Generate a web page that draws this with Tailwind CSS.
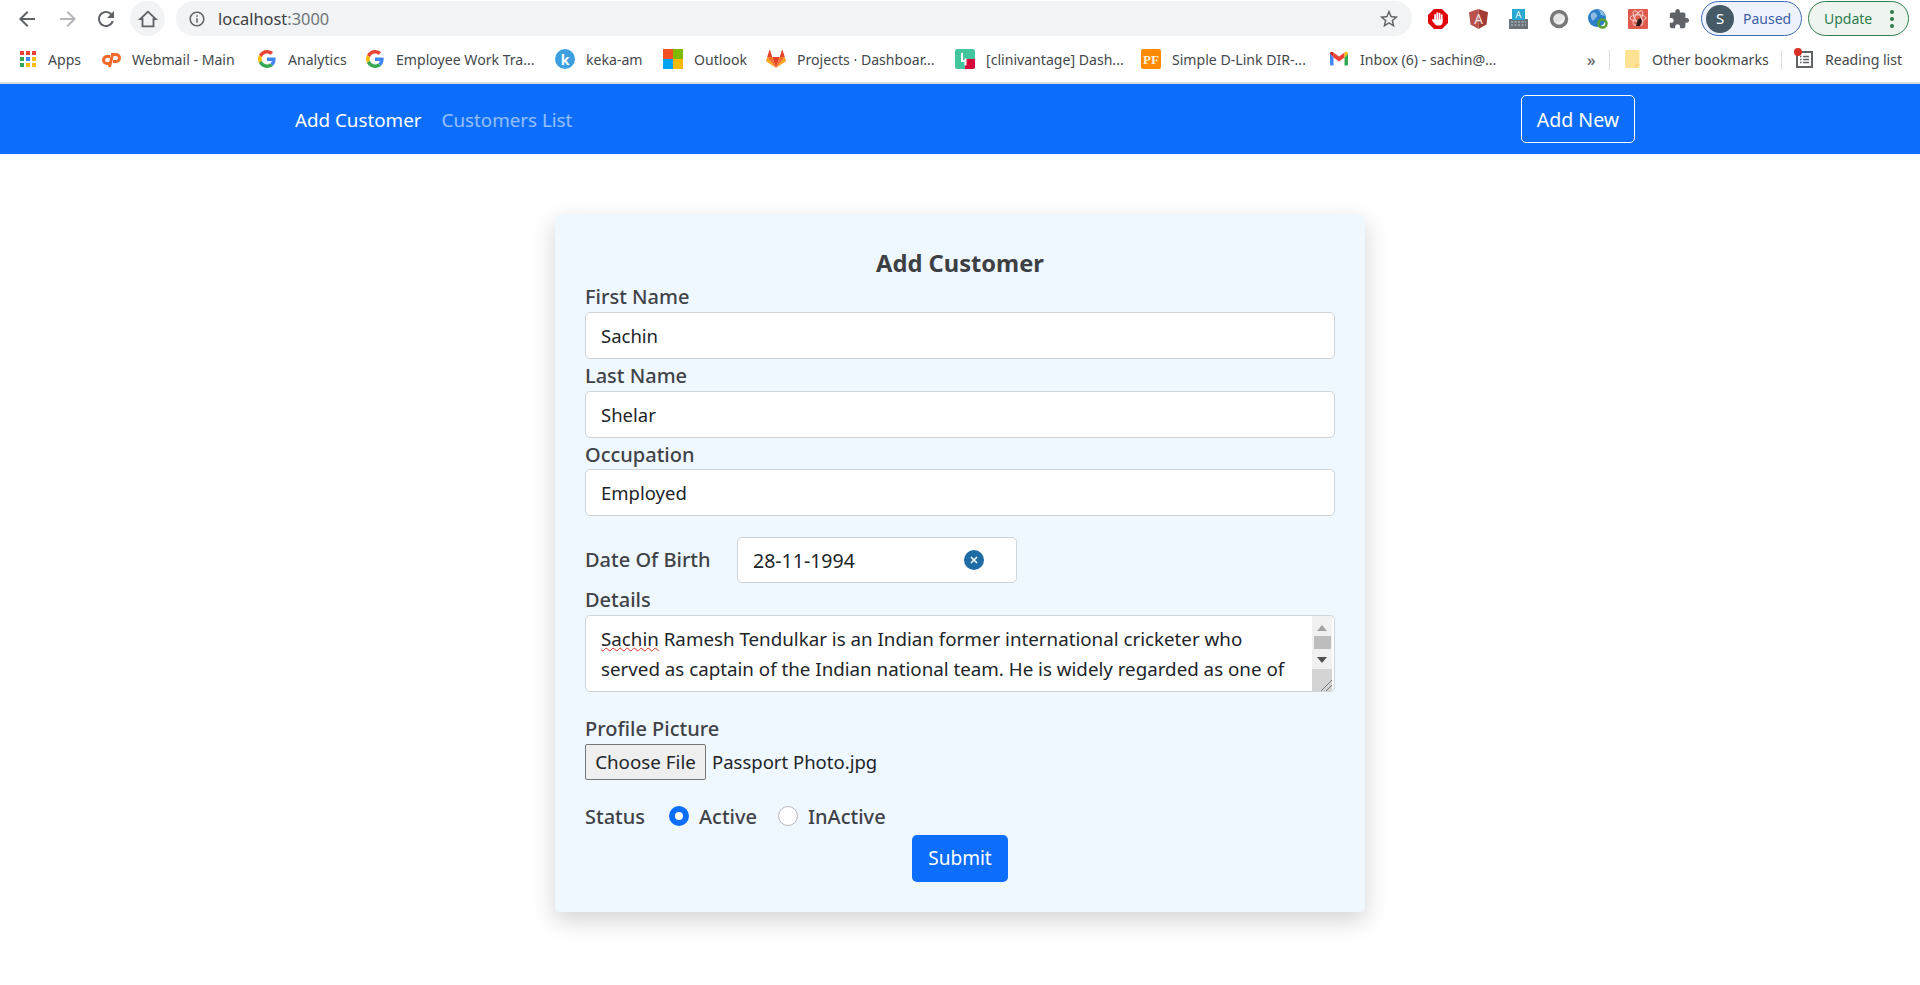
<!DOCTYPE html>
<html lang="en">
<head>
    <meta charset="UTF-8"/>
    <meta name="viewport" content="width=device-width, initial-scale=1.0"/>
    <title>Add Customer</title>
    <script src="https://cdn.jsdelivr.net/npm/@tailwindcss/browser@4"></script>
</head>
<body class="bg-white font-['Noto_Sans',sans-serif] text-[#212529] h-[985px] overflow-hidden">

<!-- browser toolbar -->
<div class="h-[37px] flex items-center relative">
    <div class="w-[54px] flex justify-center"><svg class="w-[24px] h-[24px]" viewBox="0 0 24 24" fill="#5f6368"><path d="M20 11H7.830l5.590-5.590L12 4l-8 8 8 8 1.410-1.410L7.830 13H20v-2z"/></svg></div>
    <div class="w-[28px] flex justify-center"><svg class="w-[24px] h-[24px]" viewBox="0 0 24 24" fill="#b4b6b9"><path d="M12 4l-1.410 1.410L16.170 11H4v2h12.170l-5.580 5.590L12 20l8-8z"/></svg></div>
    <div class="w-[48px] flex justify-center"><svg class="w-[24px] h-[24px]" viewBox="0 0 24 24" fill="#5f6368"><path d="M17.650 6.350C16.200 4.900 14.210 4 12 4c-4.420 0-7.990 3.580-7.990 8s3.570 8 7.990 8c3.730 0 6.840-2.550 7.730-6h-2.080c-.82 2.330-3.040 4-5.650 4-3.310 0-6-2.690-6-6s2.690-6 6-6c1.660 0 3.140.69 4.220 1.780L13 11h7V4l-2.350 2.350z"/></svg></div>
    <div class="w-[35px] h-[35px] rounded-full bg-[#f1f3f4] flex items-center justify-center"><svg class="w-[22px] h-[22px]" viewBox="0 0 24 24" fill="none" stroke="#5f6368" stroke-width="2"><path d="M12 4 3.500 12H6v8h12v-8h2.500z"/></svg></div>
    <div class="ml-[11px] w-[1236px] h-[35px] rounded-full bg-[#f1f3f4] flex items-center pl-[12px] pr-[12px]">
        <svg class="w-[18px] h-[18px]" viewBox="0 0 24 24" fill="#5f6368"><path d="M11 7h2v2h-2zm0 4h2v6h-2zm1-9C6.480 2 2 6.480 2 12s4.480 10 10 10 10-4.480 10-10S17.520 2 12 2zm0 18c-4.410 0-8-3.590-8-8s3.590-8 8-8 8 3.590 8 8-3.590 8-8 8z"/></svg>
        <span class="ml-[12px] pt-[1px] text-[16.400px] text-[#3c4043]">localhost<span class="text-[#70757a]">:3000</span></span>
        <svg class="w-[22px] h-[22px] ml-auto" viewBox="0 0 24 24" fill="#5f6368"><path d="M22 9.240l-7.190-.62L12 2 9.190 8.630 2 9.240l5.460 4.730L5.820 21 12 17.270 18.180 21l-1.640-7.030L22 9.240zM12 15.400l-3.760 2.270 1-4.280-3.320-2.880 4.380-.38L12 6.100l1.710 4.040 4.380.38-3.320 2.880 1 4.280L12 15.400z"/></svg>
    </div>
    <!-- extensions -->
    <div class="flex items-center ml-[16px] pt-[1px]">
        <div class="w-[41px] flex"><svg class="w-[20px] h-[20px]" viewBox="0 0 20 20"><path d="M6 0h8l6 6v8l-6 6H6l-6-6V6z" fill="#e0060b"/><g fill="#fff"><rect x="6.200" y="5" width="1.800" height="7" rx=".9"/><rect x="8.400" y="3.200" width="1.800" height="8" rx=".9"/><rect x="10.600" y="3.800" width="1.800" height="8" rx=".9"/><rect x="12.800" y="5.200" width="1.800" height="7" rx=".9"/><path d="M6.200 10.500h8.400V13c0 2-1.200 3.500-3.200 3.500H9.500c-1.300 0-2-.6-2.800-1.800L4 11.500c-.5-.9.600-1.700 1.300-1z"/></g></svg></div>
        <div class="w-[40px] flex"><svg class="w-[19px] h-[20px]" viewBox="0 0 19 20"><path d="M9.500 0 0 3.300 1.500 15.500 9.500 20z" fill="#b8524b"/><path d="M9.500 0 19 3.300 17.500 15.500 9.500 20z" fill="#a33b35"/><text x="9.500" y="14.500" text-anchor="middle" font-size="13.500" fill="#f1e4e2" font-family="Noto Sans">A</text></svg></div>
        <div class="w-[40px] flex"><svg class="w-[19px] h-[20px]" viewBox="0 0 19 20"><rect x="3" y="0" width="13" height="11" fill="#2aa9d2"/><text x="9.500" y="8.500" text-anchor="middle" font-size="9" fill="#fff" font-family="Noto Sans">A</text><path d="M0 10h3v1h13v-1h3v10H0z" fill="#6c7378"/><path d="M2 13h15M2 16h15" stroke="#c5cdd1" stroke-dasharray="2 1.500"/></svg></div>
        <div class="w-[39px] flex"><svg class="w-[20px] h-[20px]" viewBox="0 0 20 20"><circle cx="10" cy="10" r="7.500" fill="#e4e4e4" stroke="#787878" stroke-width="3.500"/><path d="M6 13a5.500 5.500 0 0 0 8-8 6 6 0 0 1-8 8z" fill="#f7f7f7"/></svg></div>
        <div class="w-[40px] flex"><svg class="w-[20px] h-[20px]" viewBox="0 0 20 20"><circle cx="9" cy="9" r="9" fill="#2b7fc9"/><path d="M3 5c3-3 5-1 6 1s-2 3-3 5-4-2-3-6zM11 1c3 .5 5 3 6 6l-4-1z" fill="#8dbbe0"/><circle cx="14.500" cy="14.500" r="4" fill="none" stroke="#5aa02c" stroke-width="2.500"/></svg></div>
        <div class="w-[40px] flex"><svg class="w-[20px] h-[20px]" viewBox="0 0 20 20"><rect width="20" height="20" rx="1" fill="#dd5a4d"/><g fill="none" stroke="#f9d3cf"><ellipse cx="10" cy="9" rx="8" ry="3.200"/><ellipse cx="10" cy="9" rx="8" ry="3.200" transform="rotate(60 10 9)"/><ellipse cx="10" cy="9" rx="8" ry="3.200" transform="rotate(120 10 9)"/></g><path d="M8 17l1.500-6 3-2 1.500 3-2 5z" fill="#2a1a1a"/></svg></div>
        <div class="w-[33px] flex"><svg class="w-[22px] h-[22px]" viewBox="0 0 24 24" fill="#5f6368"><path d="M20.500 11H19V7c0-1.100-.9-2-2-2h-4V3.500C13 2.120 11.880 1 10.500 1S8 2.120 8 3.500V5H4c-1.100 0-1.990.9-1.990 2v3.800H3.500c1.490 0 2.700 1.210 2.700 2.700s-1.210 2.700-2.700 2.700H2V20c0 1.100.9 2 2 2h3.800v-1.500c0-1.490 1.210-2.700 2.700-2.700 1.490 0 2.700 1.210 2.700 2.700V22H17c1.100 0 2-.9 2-2v-4h1.500c1.380 0 2.500-1.120 2.500-2.500S21.880 11 20.500 11z"/></svg></div>
    </div>
    <div class="w-[101px] h-[35px] rounded-full border border-[#3b6cb4] bg-[#eef2fb] flex items-center pl-[4px]">
        <span class="w-[28px] h-[28px] rounded-full bg-[#455a64] text-white text-[15px] flex items-center justify-center">S</span>
        <span class="ml-[9px] text-[14px] text-[#3b5ea8]">Paused</span>
    </div>
    <div class="ml-[6px] w-[101px] h-[35px] rounded-full border border-[#2e7d4f] bg-[#eef5ef] flex items-center pl-[15px]">
        <span class="text-[14px] text-[#2e7d4f]">Update</span>
        <svg class="w-[4px] h-[18px] ml-[18px]" viewBox="0 0 4 18" fill="#2e7d4f"><circle cx="2" cy="2" r="2"/><circle cx="2" cy="9" r="2"/><circle cx="2" cy="16" r="2"/></svg>
    </div>
</div>

<!-- bookmarks bar -->
<div class="h-[47px] flex items-center pl-[17px] text-[14.100px] text-[#45484c] border-b-2 border-[#dadce0]">
    <a class="w-[84px] flex items-center gap-[11px]"><svg class="w-5 h-5" viewBox="0 0 20 20"><rect x="3" y="2" width="4" height="4" fill="#ea4335"/><rect x="9" y="2" width="4" height="4" fill="#ea4335"/><rect x="15" y="2" width="4" height="4" fill="#ea4335"/><rect x="3" y="8" width="4" height="4" fill="#34a853"/><rect x="9" y="8" width="4" height="4" fill="#4285f4"/><rect x="15" y="8" width="4" height="4" fill="#fbbc05"/><rect x="3" y="14" width="4" height="4" fill="#34a853"/><rect x="9" y="14" width="4" height="4" fill="#fbbc05"/><rect x="15" y="14" width="4" height="4" fill="#fbbc05"/></svg>Apps</a>
    <a class="w-[156px] flex items-center gap-[11px]"><svg class="w-5 h-5" viewBox="0 0 20 20" fill="none" stroke="#f26a2a" stroke-width="3"><path d="M9 7.500H6a3.500 3.500 0 0 0 0 7h3"/><path d="M8.500 18 11.500 5.500H15a3.500 3.500 0 0 1 0 7h-3"/></svg>Webmail - Main</a>
    <a class="w-[108px] flex items-center gap-[11px]"><svg class="w-5 h-5 p-[1px]" viewBox="0 0 48 48"><path fill="#EA4335" d="M24 9.500c3.540 0 6.710 1.220 9.210 3.600l6.850-6.850C35.900 2.380 30.470 0 24 0 14.620 0 6.510 5.380 2.560 13.220l7.980 6.190C12.430 13.720 17.740 9.500 24 9.500z"/><path fill="#4285F4" d="M46.980 24.550c0-1.570-.15-3.090-.38-4.550H24v9.020h12.940c-.58 2.960-2.260 5.480-4.780 7.180l7.730 6c4.510-4.180 7.090-10.360 7.090-17.650z"/><path fill="#FBBC05" d="M10.530 28.590c-.48-1.450-.76-2.990-.76-4.590s.27-3.140.76-4.590l-7.980-6.190C.92 16.460 0 20.120 0 24c0 3.880.92 7.540 2.560 10.780l7.970-6.190z"/><path fill="#34A853" d="M24 48c6.480 0 11.930-2.130 16.090-5.810l-7.730-6c-2.150 1.450-4.920 2.300-8.360 2.300-6.260 0-11.570-4.220-13.470-9.910l-7.980 6.190C6.510 42.620 14.620 48 24 48z"/></svg>Analytics</a>
    <a class="w-[190px] flex items-center gap-[11px]"><svg class="w-5 h-5 p-[1px]" viewBox="0 0 48 48"><path fill="#EA4335" d="M24 9.500c3.540 0 6.710 1.220 9.210 3.600l6.850-6.850C35.900 2.380 30.470 0 24 0 14.620 0 6.510 5.380 2.560 13.220l7.980 6.190C12.430 13.720 17.740 9.500 24 9.500z"/><path fill="#4285F4" d="M46.980 24.550c0-1.570-.15-3.090-.38-4.550H24v9.020h12.940c-.58 2.960-2.260 5.480-4.780 7.180l7.730 6c4.510-4.180 7.090-10.360 7.090-17.650z"/><path fill="#FBBC05" d="M10.530 28.590c-.48-1.450-.76-2.990-.76-4.590s.27-3.140.76-4.590l-7.980-6.190C.92 16.460 0 20.120 0 24c0 3.880.92 7.540 2.560 10.780l7.970-6.190z"/><path fill="#34A853" d="M24 48c6.480 0 11.930-2.130 16.090-5.810l-7.730-6c-2.150 1.450-4.920 2.300-8.360 2.300-6.260 0-11.570-4.220-13.470-9.910l-7.980 6.190C6.510 42.620 14.620 48 24 48z"/></svg>Employee Work Tra...</a>
    <a class="w-[108px] flex items-center gap-[11px]"><span class="w-5 h-5 rounded-full bg-[#3e9fe0] text-white text-[14px] font-bold flex items-center justify-center">k</span>keka-am</a>
    <a class="w-[103px] flex items-center gap-[11px]"><svg class="w-5 h-5" viewBox="0 0 20 20"><rect width="10" height="10" fill="#f25022"/><rect x="10" width="10" height="10" fill="#7fba00"/><rect y="10" width="10" height="10" fill="#00a4ef"/><rect x="10" y="10" width="10" height="10" fill="#ffb900"/></svg>Outlook</a>
    <a class="w-[189px] flex items-center gap-[11px]"><svg class="w-5 h-5" viewBox="0 0 20 20"><path d="M10 19 6.300 8h7.400z" fill="#e24329"/><path d="M10 19 6.300 8H1.200zM10 19l3.700-11h5.100z" fill="#fc6d26"/><path d="M1.200 8 0 11.500a1 1 0 0 0 .4 1L10 19zM18.800 8 20 11.500a1 1 0 0 1-.4 1L10 19z" fill="#fca326"/><path d="M1.200 8h5.100L4.100 1.200a.4.4 0 0 0-.7 0zM18.800 8h-5.100l2.200-6.800a.4.4 0 0 1 .7 0z" fill="#e24329"/></svg>Projects · Dashboar...</a>
    <a class="w-[186px] flex items-center gap-[11px]"><svg class="w-5 h-5" viewBox="0 0 20 20"><rect width="20" height="20" rx="2.500" fill="#43c59e"/><path d="M10 10h10v7.500a2.500 2.500 0 0 1-2.500 2.500H10z" fill="#d6083b"/><path d="M7 4v8h4" fill="none" stroke="#fff" stroke-width="2"/><path d="M10.500 9.500v7" stroke="#fff" stroke-width="2"/></svg>[clinivantage] Dash...</a>
    <a class="w-[188px] flex items-center gap-[11px]"><span class="w-5 h-5 rounded-[2px] bg-[#ff8a00] text-[#fff3dc] text-[13px] font-bold flex items-center justify-center font-['Liberation_Serif',serif]">PF</span>Simple D-Link DIR-...</a>
    <a class="w-[258px] flex items-center gap-[11px]"><svg class="w-5 h-5" viewBox="0 0 20 20"><path d="M1 4.500V15.500a1 1 0 0 0 1 1h2.500V8.500z" fill="#4285f4"/><path d="M19 4.500V15.500a1 1 0 0 1-1 1h-2.500V8.500z" fill="#34a853"/><path d="M4.500 8.500 10 12.500l5.500-4V3.500L10 7.500 4.500 3.500z" fill="#ea4335"/><path d="M1 4.500 4.500 8.500V3.500C3 2.700 1 3 1 4.500z" fill="#c5221f"/><path d="M19 4.500l-3.500 4V3.500c1.500-.8 3.500-.5 3.500 1z" fill="#fbbc04"/></svg>Inbox (6) - sachin@...</a>
    <span class="w-[22px] text-[16px] font-medium text-[#5f6368]">»</span>
    <span class="w-px h-[20px] bg-[#dadce0]"></span>
    <a class="ml-[15px] w-[156px] flex items-center gap-[11px]"><svg class="w-[16px] h-[18px]" viewBox="0 0 16 18"><path d="M1.500 0h11C14 0 14.500.5 14.500 1.500V16c0 1-.5 2-1.500 2H1.500C.5 18 0 17.500 0 16.500V1.500C0 .5.500 0 1.500 0z" fill="#fde293"/><path d="M10.500 18v-3h4" fill="none" stroke="#f9cb67"/></svg>Other bookmarks</a>
    <span class="w-px h-[20px] bg-[#dadce0]"></span>
    <a class="ml-[12px] flex items-center gap-[11px] relative"><svg class="w-[20px] h-[20px]" viewBox="0 0 20 20"><rect x="3" y="3" width="15" height="15" fill="none" stroke="#5f6368" stroke-width="2"/><path d="M6 7.500h1.500M9 7.500h6M6 10.500h1.500M9 10.500h6M6 13.500h1.500M9 13.500h6" stroke="#5f6368" stroke-width="1.500"/></svg><span class="absolute left-[0px] -top-[1px] w-[8px] h-[8px] rounded-full bg-[#d93025]"></span>Reading list</a>
</div>

<!-- navbar -->
<nav class="h-[70px] bg-[#0d6efd] flex items-center pl-[295px] pr-[285px] text-[18.800px]">
    <a class="text-white pt-[2px]">Add Customer</a>
    <a class="ml-[20px] text-white/55 pt-[2px]">Customers List</a>
    <button class="ml-auto w-[114px] h-[48px] rounded-[5px] border border-white text-white text-[19.500px] pt-[1px]">Add New</button>
</nav>

<!-- form card -->
<main class="flex justify-center pt-[61px]">
    <form class="w-[810px] h-[697px] bg-[#eff7ff] rounded-[5px] shadow-[0_8px_24px_rgba(0,0,0,0.18)] px-[30px] pt-[30px] text-[18.500px]">
        <h3 class="h-[37px] text-center font-bold text-[23.700px] leading-[37px] text-[#3d4043]">Add Customer</h3>

        <label class="block h-[30px] leading-[30px] text-[20px] font-medium text-[#3f4348]">First Name</label>
        <input type="text" value="Sachin" class="block w-full h-[47px] px-[15px] bg-white border border-[#ced4da] rounded-[5px]"/>
        <label class="block h-[31.500px] leading-[33px] text-[20px] font-medium text-[#3f4348]">Last Name</label>
        <input type="text" value="Shelar" class="block w-full h-[47px] px-[15px] bg-white border border-[#ced4da] rounded-[5px]"/>
        <label class="block h-[31.500px] leading-[33px] text-[20px] font-medium text-[#3f4348]">Occupation</label>
        <input type="text" value="Employed" class="block w-full h-[47px] px-[15px] bg-white border border-[#ced4da] rounded-[5px]"/>

        <div class="flex items-center mt-[21px] h-[46px]">
            <label class="w-[152px] text-[20px] font-medium text-[#3f4348]">Date Of Birth</label>
            <div class="relative w-[280px] h-[46px]">
                <input type="text" value="28-11-1994" class="block w-full h-full px-[15px] text-[19.500px] bg-white border border-[#ced4da] rounded-[5px]"/>
                <span class="absolute left-[227px] top-[13px] w-[20px] h-[20px] rounded-full bg-[#1e6ca3] flex items-center justify-center">
                    <svg class="w-[8px] h-[8px]" viewBox="0 0 8 8" stroke="#fff" stroke-width="1.500"><path d="M1 1l6 6M7 1 1 7"/></svg>
                </span>
            </div>
        </div>

        <label class="block h-[32px] leading-[33px] text-[20px] font-medium text-[#3f4348]">Details</label>
        <div class="relative h-[77px] bg-white border border-[#ced4da] rounded-[5px] pl-[15px] pr-[40px] pt-[8px] text-[18.750px] leading-[30px] overflow-hidden whitespace-nowrap">
            <span class="underline decoration-wavy decoration-[#d93025] decoration-1">Sachin</span> Ramesh Tendulkar is an Indian former international cricketer who<br/>
            served as captain of the Indian national team. He is widely regarded as one of
            <!-- scrollbar + resize grip -->
            <div class="absolute right-[2px] top-0 bottom-0 w-[20px] bg-[#f1f1f1] flex flex-col items-center">
                <span class="mt-[9px] w-0 h-0 border-x-[5px] border-x-transparent border-b-[6px] border-b-[#a3a3a3]"></span>
                <span class="mt-[5px] w-[17px] h-[13px] bg-[#bdbdbd]"></span>
                <span class="mt-[8px] w-0 h-0 border-x-[5px] border-x-transparent border-t-[6px] border-t-[#505050]"></span>
                <span class="mt-auto w-[20px] h-[22px] bg-[#d4d4d4] flex items-end justify-end">
                    <svg class="w-[12px] h-[12px]" viewBox="0 0 12 12" stroke="#777" fill="none"><path d="M1 12 12 1M6 12l6-6"/></svg>
                </span>
            </div>
        </div>

        <label class="block mt-[22px] h-[30px] leading-[30px] text-[20px] font-medium text-[#3f4348]">Profile Picture</label>
        <div class="flex items-center">
            <button type="button" class="w-[121px] h-[36px] text-[18.800px] bg-[#efefef] border border-[#767676] rounded-[2px] text-[#212529]">Choose File</button>
            <span class="ml-[6px]">Passport Photo.jpg</span>
        </div>

        <div class="flex items-center mt-[21px] h-[32px] text-[20px] font-medium text-[#3f4348]">
            <label class="w-[84px]">Status</label>
            <input type="radio" name="status" checked class="appearance-none w-[20px] h-[20px] -mt-[2px] rounded-full bg-white border-[6px] border-[#0d6efd]"/>
            <label class="ml-[10px] w-[79px]">Active</label>
            <input type="radio" name="status" class="appearance-none w-[20px] h-[20px] -mt-[2px] rounded-full bg-white border border-[#b5b9bd]"/>
            <label class="ml-[10px]">InActive</label>
        </div>

        <div class="flex justify-center mt-[2px]">
            <button type="button" class="w-[96px] h-[47px] rounded-[5px] bg-[#0d6efd] text-white text-[19px]">Submit</button>
        </div>
    </form>
</main>
</body>
</html>
